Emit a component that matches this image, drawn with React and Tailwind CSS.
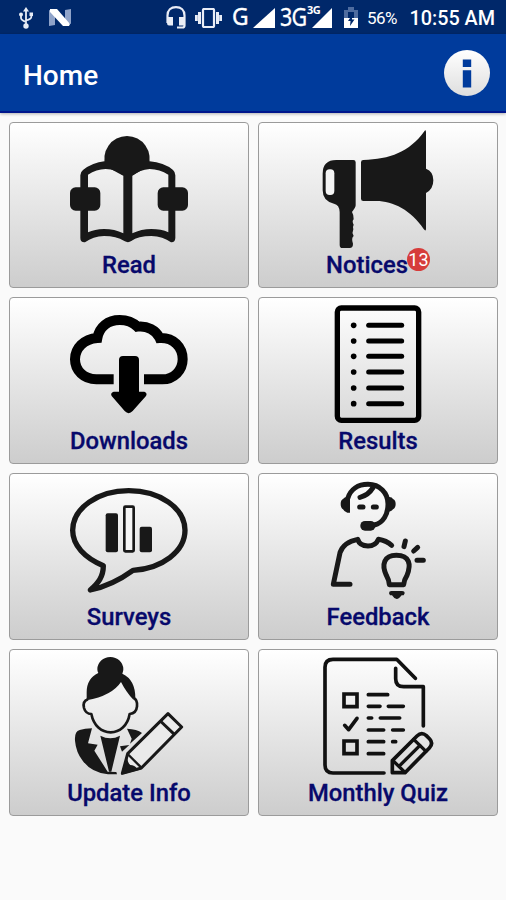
import clsx from 'clsx';

const INK = '#181818';

function ReadIcon() {
  return (
    <svg viewBox="208 38 360 360" className="h-[120px] w-[120px]" fill={INK}>
      <path d="M318 153A68 68 0 1 1 446 153L400 180H368Z" />
      <path
        fillRule="evenodd"
        d="M242 180Q242 170 250 164Q280 141 314 138H450Q492 141 520 164Q527 170 527 180V368Q526 382 514 381Q490 363 455 362Q415 362 395 377Q385 384 374 377Q350 362 313 362Q280 363 256 381Q242 382 242 368ZM265 178Q290 162 318 161Q350 162 371 181V354Q345 341 313 341Q285 342 265 351ZM398 181Q420 163 450 161Q480 162 506 178V351Q485 341 455 341Q425 341 398 354Z"
      />
      <rect x="211" y="216" width="91" height="70" rx="17" />
      <rect x="474" y="216" width="91" height="70" rx="17" />
    </svg>
  );
}

function NoticesIcon() {
  return (
    <svg viewBox="195 38 360 360" className="h-[120px] w-[120px]" fill={INK}>
      <path d="M209 175Q209 134 250 134H301Q308 134 308 141V270Q308 276 297 290Q303 300 302 312Q296 318 302 328Q298 336 301 342Q296 352 302 362Q294 368 300 385Q300 398 290 398H268Q260 398 260 388V290Q259 268 243 265Q209 258 209 225Z" />
      <rect x="218" y="162" width="26" height="77" rx="12" fill="#f4f4f4" />
      <path d="M324 141Q324 134 331 134C410 132 470 110 514 48Q519 40 519 52V160Q541 168 541 195Q541 222 519 233V340Q519 350 512 341C475 285 420 257 370 257H331Q324 257 324 250Z" />
    </svg>
  );
}

function DownloadsIcon() {
  return (
    <svg viewBox="208 34 360 360" className="h-[120px] w-[120px]">
      <path
        d="M342 263H290C252 263 226 236 226 203C226 170 252 142 293 139C299 106 325 85 360 85C383 85 401 93 413 105C442 101 470 116 480 139C522 137 549 166 549 203C549 236 523 263 488 263H433"
        fill="none"
        stroke="#000"
        strokeWidth="30"
      />
      <path d="M358 205Q358 193 370 193H406Q418 193 418 205V300H434Q444 304 439 313L399 358Q387 371 375 358L336 313Q331 304 342 300H358Z" />
    </svg>
  );
}

function ResultsIcon() {
  return (
    <svg viewBox="195 34 360 360" className="h-[120px] w-[120px]">
      <rect x="253" y="49" width="244" height="337" rx="12" fill="none" stroke="#000" strokeWidth="16" />
      {[101, 148, 194, 241, 289, 336].map((y) => (
        <g key={y}>
          <circle cx="302" cy={y} r="8.5" />
          <path d={`M347 ${y}H446`} stroke="#000" strokeWidth="15" strokeLinecap="round" />
        </g>
      ))}
    </svg>
  );
}

function SurveysIcon() {
  return (
    <svg viewBox="208 33 360 360" className="h-[120px] w-[120px]" fill={INK}>
      <path
        d="M311 293C255 270 219 232 219 187C219 120 295 68 387 68C480 68 556 120 556 187C556 250 487 302 400 307C360 336 320 356 272 366C296 345 311 326 311 293Z"
        fill="none"
        stroke={INK}
        strokeWidth="16"
        strokeLinejoin="round"
      />
      <rect x="318" y="136" width="37" height="117" rx="6" />
      <rect x="374" y="116" width="28" height="134" rx="3" fill="#f6f6f6" stroke={INK} strokeWidth="8" />
      <rect x="420" y="176" width="37" height="77" rx="6" />
    </svg>
  );
}

function FeedbackIcon() {
  return (
    <svg
      viewBox="195 33 360 360"
      className="h-[120px] w-[120px]"
      fill="none"
      stroke={INK}
      strokeWidth="15"
      strokeLinecap="round"
      strokeLinejoin="round"
    >
      {/* Head and headset */}
      <path d="M284 92C292 64 315 49 345 49C380 49 405 75 405 108C405 140 390 165 364 171" />
      <path d="M291 88V134H283Q272 130 270 124Q263 120 263 108Q263 96 270 93Q276 84 291 88ZM401 88Q416 84 420 93Q428 96 428 108Q428 120 420 124Q414 132 401 132Z" fill={INK} stroke="none" />
      <path d="M360 59Q346 82 321 88" />
      <path d="M320 117H330M361 117H370" />
      <rect x="322" y="159" width="45" height="29" rx="14" fill={INK} stroke="none" />
      {/* Shoulders */}
      <path d="M291 349H241L261 254Q272 222 314 214Q320 234 345 234Q368 234 376 214Q400 218 416 232" />
      {/* Bulb */}
      <path d="M409 350Q408 336 400 322C385 290 393 262 430 262C470 262 475 290 462 322Q453 336 452 350Z" />
      <path d="M453 236L457 219M482 249L494 238M492 277H511" />
      <path d="M408 376Q408 369 415 369H447Q455 369 455 376L452 382H446Q438 393 431 393Q424 393 417 382H411Z" fill={INK} stroke="none" />
    </svg>
  );
}

function UpdateInfoIcon() {
  return (
    <svg viewBox="208 33 360 360" className="h-[120px] w-[120px]" fill={INK}>
      <path d="M293 76A39 37 0 0 1 371 76Q371 82 368 89Q407 107 407 162L400 166Q380 145 364 114Q337 155 261 169V145Q261 103 296 87Q293 82 293 76Z" />
      <path
        d="M265 166Q248 172 253 192Q258 210 275 210C282 245 305 265 333 265C360 265 384 245 390 210Q410 208 412 187Q414 168 402 162"
        fill="none"
        stroke={INK}
        strokeWidth="8"
        strokeLinejoin="round"
      />
      {/* Jacket and shirt */}
      <path d="M226 290Q224 262 240 258Q255 253 277 253L265 298L294 302L284 320L324 383L350 384L352 391H325Q275 386 249 350Q229 325 226 290Z" />
      <path d="M302 275Q332 290 361 275L335 383H328Z" />
      <path d="M382 254Q412 255 427 267L391 299L396 284ZM361 307L389 303L367 323Z" />
      {/* Pencil */}
      <path
        d="M505 209L546 249L425 372L368 388L384 329Z"
        fill="#eaeaea"
        stroke={INK}
        strokeWidth="9"
        strokeLinejoin="round"
      />
      <path d="M482 231L524 271" stroke={INK} strokeWidth="9" />
      <path d="M364 392L382 331Q382 356 392 363Q405 363 412 374L426 376Z" />
      <path d="M384 330L425 371" stroke={INK} strokeWidth="7" />
    </svg>
  );
}

function QuizIcon() {
  return (
    <svg
      viewBox="195 33 360 360"
      className="h-[120px] w-[120px]"
      fill="none"
      stroke="#111"
      strokeWidth="11"
      strokeLinecap="round"
      strokeLinejoin="round"
    >
      <path d="M393 387H240Q216 387 216 363V70Q216 46 240 46H431L487 103" />
      <path d="M428 73V104Q428 128 452 128H511V246" />
      <path d="M273 150H312V188H273ZM273 291H312V329H273Z" strokeLinejoin="miter" />
      <path d="M275 244L287 257L312 223" />
      <path d="M346 152H404M346 187H381M406 187H451M346 222H356M382 222H440M346 258H392M419 258H451M346 293H392M419 293H428M346 329H392" />
      <path d="M418 350L492 276Q506 262 520 275L530 285Q542 298 529 312L456 386H418Z" />
      <path d="M420 350L456 385M482 286L519 322M438 367L501 304" strokeWidth="10" />
    </svg>
  );
}

const tiles = [
  { label: 'Read', Icon: ReadIcon },
  { label: 'Notices', Icon: NoticesIcon, badge: 13 },
  { label: 'Downloads', Icon: DownloadsIcon },
  { label: 'Results', Icon: ResultsIcon },
  { label: 'Surveys', Icon: SurveysIcon },
  { label: 'Feedback', Icon: FeedbackIcon },
  { label: 'Update Info', Icon: UpdateInfoIcon },
  { label: 'Monthly Quiz', Icon: QuizIcon },
];

function Signal({ className }) {
  return (
    <svg viewBox="0 0 22 20" preserveAspectRatio="none" className={clsx('h-5 shrink-0', className)} fill="#fff">
      <path d="M22 0V20H0Z" />
    </svg>
  );
}

function StatusBar() {
  return (
    <div className="flex h-[34px] items-center whitespace-nowrap bg-[#00286a] pt-px pr-[11px] text-white">
      {/* USB */}
      <svg viewBox="0 0 16 22" className="ml-[18px] h-[22px] w-4 shrink-0" fill="none" stroke="#e6ebf5" strokeWidth="1.8">
        <path d="M8 3V19M3 7V11Q3 13 8 15M13.300 7V10Q13.300 12 8 13.500" />
        <path d="M8 0L11 4.500H5Z" fill="#e6ebf5" stroke="none" />
        <circle cx="8" cy="19" r="2.700" fill="#e6ebf5" stroke="none" />
        <circle cx="3" cy="7.500" r="2" fill="#e6ebf5" stroke="none" />
        <path d="M11.500 5.500H15V9H11.500Z" fill="#e6ebf5" stroke="none" />
      </svg>
      {/* Android N */}
      <svg viewBox="0 0 22 17" className="ml-[15px] h-[17px] w-[22px] shrink-0">
        <path d="M0 1L6 3V16L0 17ZM16 1L22 0V15L16 13Z" fill="#8fa3c9" />
        <path d="M1 0H8L21 15L20 17H14L1 3Z" fill="#fff" />
      </svg>
      {/* Headset */}
      <svg viewBox="0 0 20 23" className="ml-[95px] h-[23px] w-5 shrink-0" fill="none" stroke="#e9edf6" strokeWidth="2.2">
        <path d="M1.500 17V9.500C1.500 4 5 1.200 10 1.200S18.500 4 18.500 9.500V19.500Q18.500 21.500 16.500 21.500H11" />
        <path d="M1 11H7V19.500H3Q1 19.500 1 17ZM13 11H19V19.500H13Z" fill="#e9edf6" stroke="none" />
      </svg>
      {/* Vibrate */}
      <svg viewBox="0 0 27 20" className="ml-[9px] h-5 w-[27px] shrink-0" fill="none" stroke="#e9edf6" strokeWidth="2.2">
        <rect x="8" y="1" width="11" height="18" rx="1" />
        <path d="M4.500 4V16M1.300 7V13M22.500 4V16M25.700 7V13" strokeWidth="3" />
      </svg>
      <span className="ml-[10px] w-[19px] pb-[3px] font-['Noto_Sans'] text-[24px] leading-none [-webkit-text-stroke:0.4px]">
        <span className="inline-block origin-left scale-x-95">G</span>
      </span>
      <Signal className="ml-[2px] w-[22px]" />
      <div className="relative ml-[5px] flex w-[53px] items-center">
        <span className="inline-block w-[28px] origin-left scale-x-[.86] pb-[3px] font-['Noto_Sans'] text-[25px] leading-none tracking-[-1px] [-webkit-text-stroke:0.3px]">
          3G
        </span>
        <Signal className="ml-1 w-[20px]" />
        <span className="absolute left-[27px] top-0 font-['Noto_Sans'] text-[11px] font-bold leading-none tracking-[-0.5px]">
          3G
        </span>
      </div>
      {/* Battery */}
      <svg viewBox="0 0 14 21" className="ml-[11px] h-[21px] w-[14px] shrink-0">
        <path d="M4 0H10V3H14V11H0V3H4Z" fill="#4f6c9f" />
        <path d="M4 5H10V11H4Z" fill="#00286a" />
        <path d="M0 11H14V21H0Z" fill="#fff" />
        <path d="M8 8L4 14H6.500L6 19L10.500 12.500H8Z" fill="#00286a" />
      </svg>
      <span className="ml-[9px] w-[30px] pt-px text-[17px] leading-none tracking-[-0.5px]">56%</span>
      <span className="ml-auto pt-[2px] text-[19.800px] font-medium leading-none">10:55 AM</span>
    </div>
  );
}

function Tile({ label, Icon, badge }) {
  return (
    <button className="flex h-[166.800px] flex-col items-center rounded-[4px] border border-[#9b9b9b] bg-linear-to-b from-white to-[#cdcdcd] pt-[5px]">
      <Icon />
      <span className="flex h-[34px] items-center pt-[3px] text-[23.800px] font-medium leading-none text-[#07096b] [-webkit-text-stroke:0.3px]">
        {label}
        {badge && (
          <span className="mb-[13px] -ml-px flex h-[23px] w-[23px] items-center justify-center rounded-full bg-[#d63c3a] text-[18px] font-normal text-white [-webkit-text-stroke:0px]">
            {badge}
          </span>
        )}
      </span>
    </button>
  );
}

export default function App() {
  return (
    <div className="flex h-[900px] w-[506px] flex-col overflow-hidden bg-[#fafafa] font-[Roboto,sans-serif]">
      <StatusBar />
      <header className="flex h-[79px] items-center justify-between border-b-2 border-[#00168c] bg-[#003b9c] pl-[23px] pr-[15px] shadow-[0_1px_3px_rgba(0,0,0,0.3)]">
        <h1 className="pt-[6px] text-[28px] font-medium leading-none text-white">Home</h1>
        <svg viewBox="0 0 48 48" className="h-12 w-12">
          <defs>
            <linearGradient id="info" x1="0" y1="0" x2="0" y2="1">
              <stop offset="0" stopColor="#fff" />
              <stop offset="1" stopColor="#dedede" />
            </linearGradient>
          </defs>
          <circle cx="24" cy="24" r="23" fill="url(#info)" />
          <path d="M19.800 10.500H28.200V18H19.800ZM19.800 21.200H28.200V38.500H19.800Z" fill="#003b9c" />
        </svg>
      </header>
      <main className="grid grid-cols-2 gap-[9px] px-[9px] pr-[8px] pt-[8.600px]">
        {tiles.map((tile) => (
          <Tile key={tile.label} {...tile} />
        ))}
      </main>
    </div>
  );
}
